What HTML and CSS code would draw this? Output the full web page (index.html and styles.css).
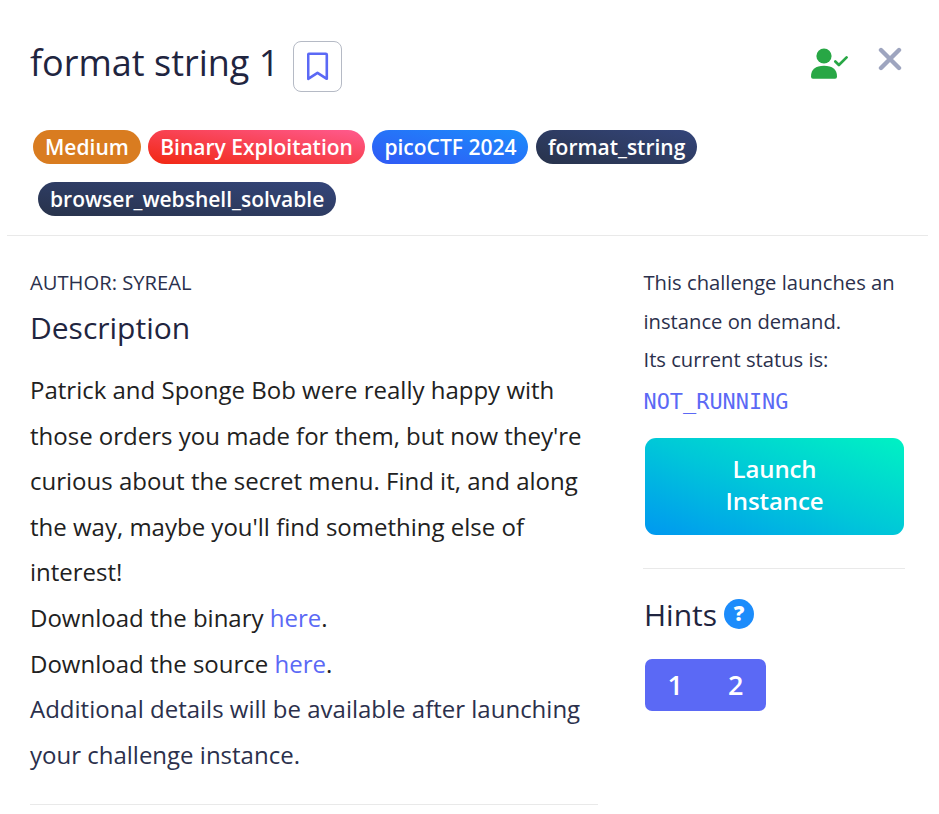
FILE: index.html
```html
<!DOCTYPE html>
<html lang="en">
<head>
<meta charset="utf-8">
<title>format string 1</title>
<link rel="stylesheet" href="styles.css">
</head>
<body>
<header class="header">
  <div class="title-row">
    <h1 class="title">format string 1</h1>
    <button class="bookmark" aria-label="Bookmark">
      <svg width="22" height="29" viewBox="0 0 22 29"><path d="M1.200 2.800Q1.200 1.800 2.200 1.800H18.800Q19.800 1.800 19.800 2.800V26.800L10.500 20.800L1.200 26.800Z" fill="none" stroke="#5b69f5" stroke-width="2.600" stroke-linejoin="round"/></svg>
    </button>
    <svg class="solved" width="38" height="31" viewBox="0 0 38 31"><circle cx="13" cy="8" r="7.600" fill="#28a745"/><path d="M0 28.500C0 21.500 4.500 17.800 13 17.800S26 21.500 26 28.500Q26 30.700 24 30.700H2Q0 30.700 0 28.500Z" fill="#28a745"/><path d="M24.300 13.500L27.900 17L35.600 9.400" fill="none" stroke="#28a745" stroke-width="2.700" stroke-linecap="round" stroke-linejoin="round"/></svg>
    <button class="close" aria-label="Close">
      <svg width="24" height="24" viewBox="0 0 24 24"><path d="M3 3L21 21M21 3L3 21" stroke="#9ea5bf" stroke-width="4.400" stroke-linecap="round"/></svg>
    </button>
  </div>
  <div class="tags">
    <span class="tag medium">Medium</span>
    <span class="tag category">Binary Exploitation</span>
    <span class="tag event">picoCTF 2024</span>
    <span class="tag topic">format_string</span>
    <span class="tag topic second">browser_webshell_solvable</span>
  </div>
</header>
<main class="content">
  <section class="details">
    <p class="author">AUTHOR: SYREAL</p>
    <h2 class="heading">Description</h2>
    <div class="description">
      <p class="brief">Patrick and Sponge Bob were really happy with<br>those orders you made for them, but now they're<br>curious about the secret menu. Find it, and along<br>the way, maybe you'll find something else of<br>interest!<br>Download the binary <a>here</a>.<br>Download the source <a>here</a>.</p>
      <p class="additional">Additional details will be available after launching<br>your challenge instance.</p>
    </div>
  </section>
  <aside class="side">
    <p class="status">This challenge launches an<br>instance on demand.<br>Its current status is:</p>
    <code class="state">NOT_RUNNING</code>
    <button class="launch">Launch<br>Instance</button>
    <div class="hints">
      <h2 class="hints-title">Hints</h2>
      <span class="help">?</span>
    </div>
    <div class="hint-buttons"><button>1</button><button>2</button></div>
  </aside>
</main>
</body>
</html>
```

FILE: styles.css
```css
* { box-sizing: border-box; }
body { margin: 0; width: 939px; height: 814px; overflow: hidden; background: #fff; color: #2b304c; font-family: "Open Sans", sans-serif; }
h1, h2, p { margin: 0; font-weight: 400; }
button { font-family: inherit; border: 0; padding: 0; background: none; }
svg { display: block; }
.header { height: 236px; margin: 0 11px 0 7px; padding: 40px 26px 0 23px; border-bottom: 1px solid #e9e9e9; }
.title-row { display: flex; align-items: flex-start; height: 52px; }
.title { width: 263px; font-size: 36px; line-height: 46px; color: #1f2540; white-space: nowrap; }
.bookmark { display: flex; align-items: center; justify-content: center; width: 49px; height: 51px; margin-top: 1px; border: 1px solid #b5bac5; border-radius: 8px; }
.solved { margin: 8px 0 0 469px; }
.close { margin: 7px 0 0 29px; }
.tags { display: flex; flex-wrap: wrap; gap: 18px 7.500px; margin: 38px 0 0 3px; }
.tag { height: 34px; padding: 0 12px; border-radius: 17px; font-size: 21px; font-weight: 600; line-height: 34px; color: #fff; white-space: nowrap; }
.medium { background: #d97c20; }
.category { background: linear-gradient(to top right, #f12711, #ff5b8f); }
.event { background: linear-gradient(to top right, #3059f5, #1c8cfb); }
.topic { background: linear-gradient(to top right, #28334b, #34457a); }
.second { margin-left: 5px; }
.content { display: flex; padding: 27px 34px 0 30px; }
.details { width: 568px; height: 542px; border-bottom: 1px solid #e9e9e9; }
.author { font-size: 20.200px; line-height: 39px; }
.heading { font-size: 30px; line-height: 40px; margin-top: 6px; color: #1f2540; }
.description { margin-top: 19px; font-size: 24px; line-height: 45.600px; white-space: nowrap; }
.brief { color: #212121; }
.brief a { color: #5b69f5; }
.side { width: 262px; margin-left: 45px; }
.status { font-size: 20.200px; line-height: 38.500px; padding-left: .5px; white-space: nowrap; }
.state { display: block; padding-left: .5px; font: 21.900px/40px "DejaVu Sans Mono", monospace; color: #5b69f5; margin-top: 3.500px; }
.launch { display: block; width: 259px; height: 97px; margin: 16px 0 33px 2px; padding-bottom: 3px; border-radius: 11px; background: linear-gradient(to top right, #0098f0, #00c8d8 50%, #00f2c3); color: #fff; font-size: 24px; font-weight: 600; letter-spacing: -.1px; line-height: 32px; }
.hints { display: flex; align-items: center; height: 91px; border-top: 1px solid #e9e9e9; padding-left: 1px; }
.hints-title { font-size: 30px; color: #1f2540; }
.help { width: 30px; height: 30px; margin: 0 0 1px 7px; border-radius: 50%; background: #1c8cfb; color: #fff; text-align: center; font-size: 21px; font-weight: 800; line-height: 29px; }
.hint-buttons { display: flex; width: 121px; height: 52px; margin-left: 2px; border-radius: 7px; background: #5b69f5; }
.hint-buttons button { flex: 1; color: #fff; font-size: 27px; font-weight: 600; padding-bottom: 1px; }
```
